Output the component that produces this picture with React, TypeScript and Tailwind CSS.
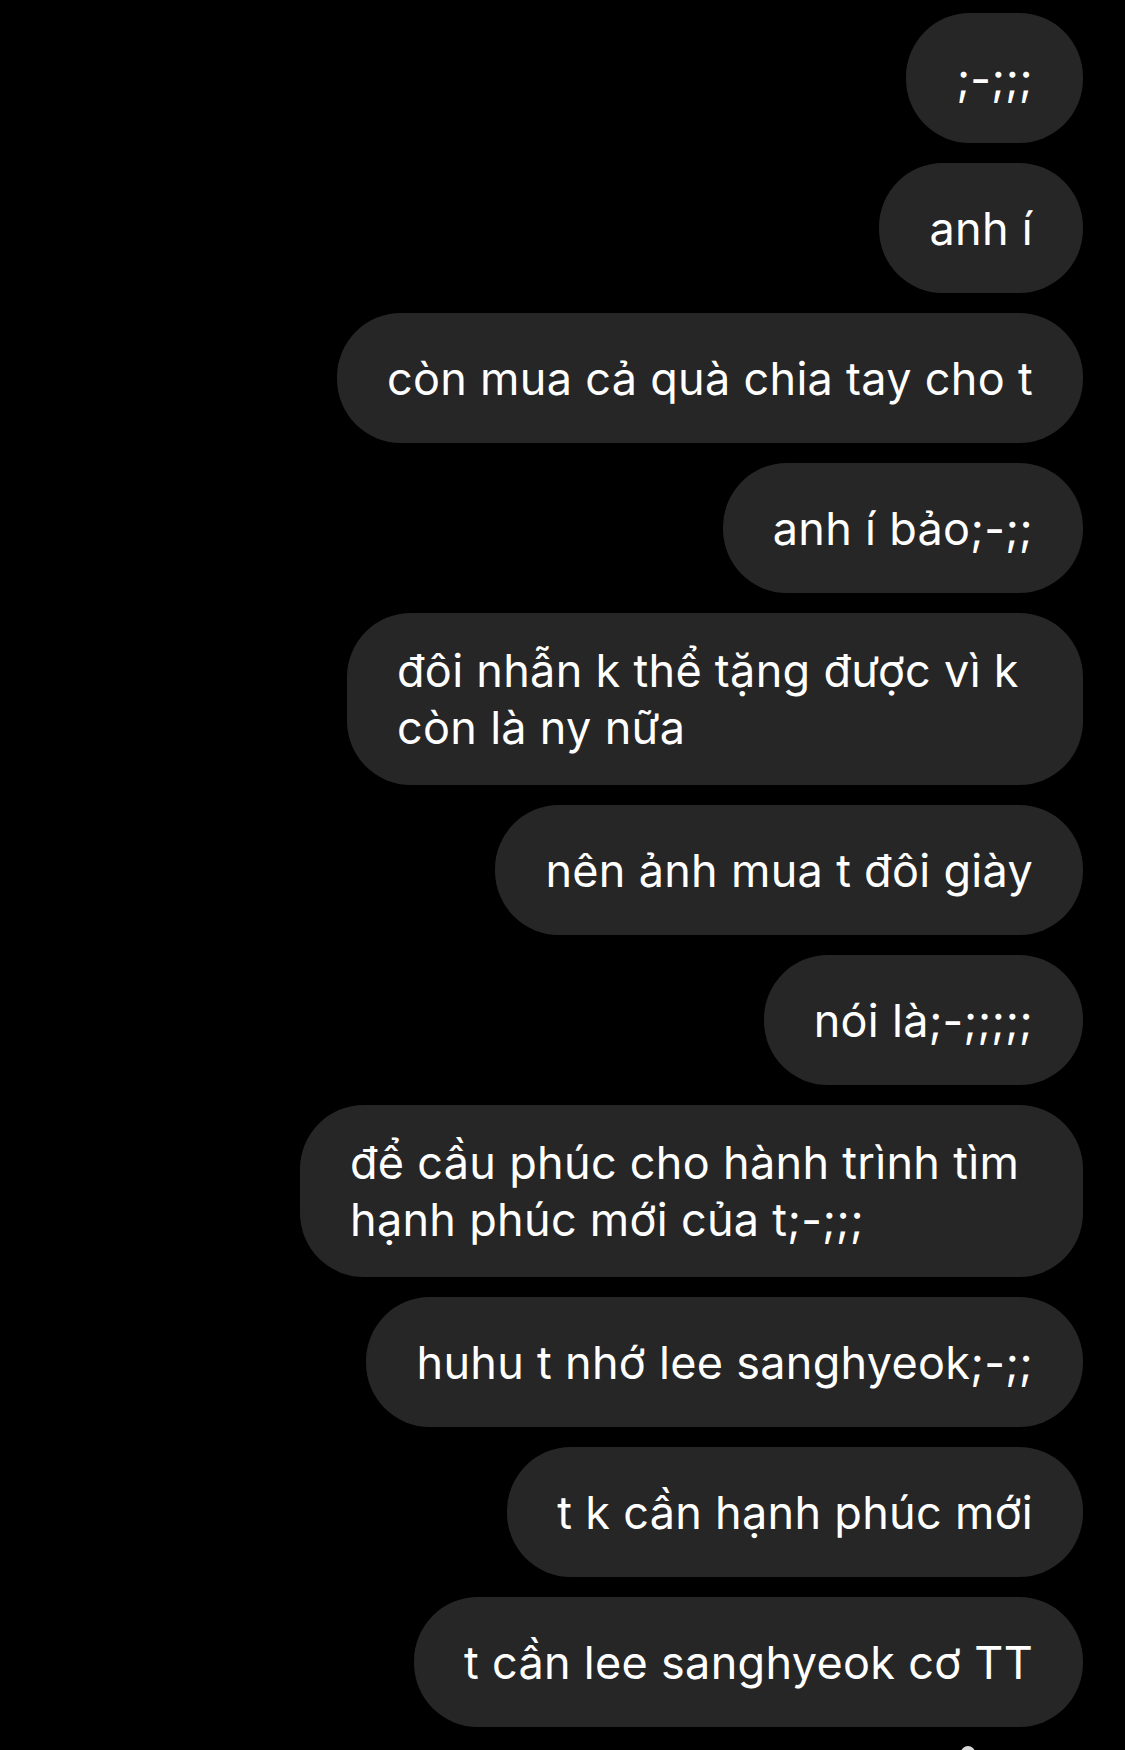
type Message = { lines: string[]; width?: string }

const messages: Message[] = [
  { lines: [";-;;;"] },
  { lines: ["anh í"] },
  { lines: ["còn mua cả quà chia tay cho t"] },
  { lines: ["anh í bảo;-;;"] },
  { lines: ["đôi nhẫn k thể tặng được vì k", "còn là ny nữa"], width: "w-[736px]" },
  { lines: ["nên ảnh mua t đôi giày"] },
  { lines: ["nói là;-;;;;;"] },
  { lines: ["để cầu phúc cho hành trình tìm", "hạnh phúc mới của t;-;;;"], width: "w-[783px]" },
  { lines: ["huhu t nhớ lee sanghyeok;-;;"] },
  { lines: ["t k cần hạnh phúc mới"] },
  { lines: ["t cần lee sanghyeok cơ TT"] },
]

function Bubble({ lines, width }: Message) {
  return (
    <div
      className={`flex min-h-[130px] items-center rounded-[64px] bg-[#262626] px-[50px] py-[29px] ${width ?? ""}`}
    >
      <div className="flex flex-col">
        {lines.map((line) => (
          <span key={line} className="whitespace-nowrap text-[45px] leading-[57px] tracking-[0.3px] text-white">
            {line}
          </span>
        ))}
      </div>
    </div>
  )
}

export default function App() {
  return (
    <div
      className="h-[1750px] w-[1125px] overflow-hidden bg-black"
      style={{ fontFamily: "Inter, 'Noto Sans', sans-serif" }}
    >
      <div className="flex flex-col items-end gap-[20px] pr-[42px] pt-[13px]">
        {messages.map((m) => (
          <Bubble key={m.lines.join("|")} {...m} />
        ))}
        {/* seen avatar, cut off at the bottom */}
        <div className="-mt-[1px] mr-[108px] h-[14px] w-[14px] rounded-full bg-[#d9d9d9]" />
      </div>
    </div>
  )
}
